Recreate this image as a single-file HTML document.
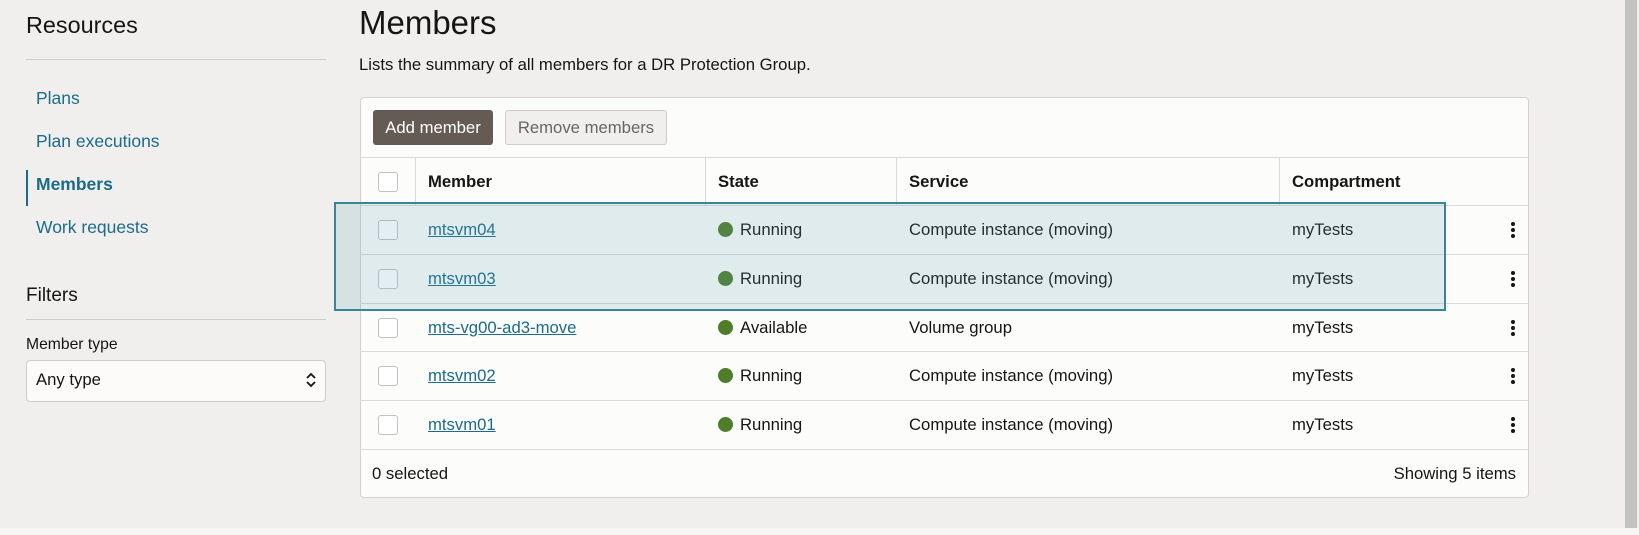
<!DOCTYPE html>
<html><head><style>
body{margin:0;width:1639px;height:535px;background:#f1efed;font-family:"Liberation Sans",sans-serif;position:relative;overflow:hidden;color:#161513}
.a{position:absolute}
.nav{color:#1b6b8a;font-size:17.5px}
.hr{position:absolute;height:1px;background:#cfccc9}
.cb{position:absolute;left:378px;width:18px;height:18px;border:1px solid #c4c1be;border-radius:3px;background:#fff}
.row{position:absolute;left:360px;width:1168px;height:48px;border-top:1px solid #dcd9d6;font-size:16.7px}
.row span{position:absolute;top:14px}
.lnk{color:#1b6b8a;text-decoration:underline}
.dot{display:inline-block;width:15px;height:15px;border-radius:50%;background:#4f7d2a;vertical-align:-2px;margin-right:7px}
.kb{position:absolute;left:1151px;top:16px;width:4px}
.kb i{display:block;width:4px;height:4px;border-radius:50%;background:#161513;margin-bottom:2px}
</style></head><body>
<div class="a" style="left:1625px;top:0;width:12px;height:528px;background:#c2c2c2"></div>
<div class="a" style="left:0;top:528px;width:1639px;height:7px;background:#f7f6f5"></div>
<div class="a" style="left:26px;top:12px;font-size:23.4px">Resources</div>
<div class="hr" style="left:26px;top:59px;width:300px"></div>
<div class="a nav" style="left:36px;top:88px">Plans</div>
<div class="a nav" style="left:36px;top:131px">Plan executions</div>
<div class="a" style="left:26px;top:170px;width:2px;height:36px;background:#1b6b8a"></div>
<div class="a nav" style="left:36px;top:174px;font-weight:bold">Members</div>
<div class="a nav" style="left:36px;top:217px">Work requests</div>
<div class="a" style="left:26px;top:285px;font-size:19px">Filters</div>
<div class="hr" style="left:26px;top:319px;width:300px"></div>
<div class="a" style="left:26px;top:336px;font-size:15.7px">Member type</div>
<div class="a" style="left:26px;top:360px;width:298px;height:40px;border:1px solid #cfccc9;border-radius:4px;background:#fcfbfa"></div>
<div class="a" style="left:36px;top:370px;font-size:16.7px">Any type</div>
<svg class="a" style="left:305px;top:371px" width="12" height="18"><path d="M2 7l4-4 4 4M2 11l4 4 4-4" fill="none" stroke="#161513" stroke-width="1.8"/></svg>
<div class="a" style="left:359px;top:4px;font-size:33px">Members</div>
<div class="a" style="left:359px;top:55px;font-size:16.7px">Lists the summary of all members for a DR Protection Group.</div>
<div class="a" style="left:360px;top:97px;width:1167px;height:399px;border:1px solid #d4d1ce;border-radius:4px;background:#fcfcfb"></div>
<div class="a" style="left:373px;top:110px;width:120px;height:35px;background:#655b55;border-radius:3px;color:#fff;font-size:16.7px;line-height:35px;text-align:center">Add member</div>
<div class="a" style="left:505px;top:110px;width:160px;height:33px;border:1px solid #cfccc9;background:#f1efed;border-radius:3px;color:#6b6560;font-size:16.7px;line-height:33px;text-align:center">Remove members</div>
<div class="row" style="top:157px;height:48px;font-weight:bold">
<span style="left:68px">Member</span><span style="left:358px">State</span><span style="left:549px">Service</span><span style="left:932px">Compartment</span>
<div class="a" style="left:55px;top:0;width:1px;height:48px;background:#dcd9d6"></div>
<div class="a" style="left:345px;top:0;width:1px;height:48px;background:#dcd9d6"></div>
<div class="a" style="left:536px;top:0;width:1px;height:48px;background:#dcd9d6"></div>
<div class="a" style="left:919px;top:0;width:1px;height:48px;background:#dcd9d6"></div>
</div>
<div class="cb" style="top:172px"></div>
<div class="row" style="top:205px"><span class="lnk" style="left:68px">mtsvm04</span><span style="left:358px"><i class="dot"></i>Running</span><span style="left:549px">Compute instance (moving)</span><span style="left:932px">myTests</span><div class="kb"><i></i><i></i><i></i></div></div>
<div class="row" style="top:254px"><span class="lnk" style="left:68px">mtsvm03</span><span style="left:358px"><i class="dot"></i>Running</span><span style="left:549px">Compute instance (moving)</span><span style="left:932px">myTests</span><div class="kb"><i></i><i></i><i></i></div></div>
<div class="row" style="top:303px"><span class="lnk" style="left:68px">mts-vg00-ad3-move</span><span style="left:358px"><i class="dot"></i>Available</span><span style="left:549px">Volume group</span><span style="left:932px">myTests</span><div class="kb"><i></i><i></i><i></i></div></div>
<div class="row" style="top:351px"><span class="lnk" style="left:68px">mtsvm02</span><span style="left:358px"><i class="dot"></i>Running</span><span style="left:549px">Compute instance (moving)</span><span style="left:932px">myTests</span><div class="kb"><i></i><i></i><i></i></div></div>
<div class="row" style="top:400px"><span class="lnk" style="left:68px">mtsvm01</span><span style="left:358px"><i class="dot"></i>Running</span><span style="left:549px">Compute instance (moving)</span><span style="left:932px">myTests</span><div class="kb"><i></i><i></i><i></i></div></div>
<div class="row" style="top:449px"><span style="left:12px">0 selected</span><span style="right:12px">Showing 5 items</span></div>
<div class="cb" style="top:220px"></div><div class="cb" style="top:269px"></div><div class="cb" style="top:318px"></div><div class="cb" style="top:366px"></div><div class="cb" style="top:415px"></div>
<div class="a" style="left:334px;top:202px;width:1108px;height:105px;border:2px solid #3a8699;background:rgba(96,160,175,0.18)"></div>
</body></html>
